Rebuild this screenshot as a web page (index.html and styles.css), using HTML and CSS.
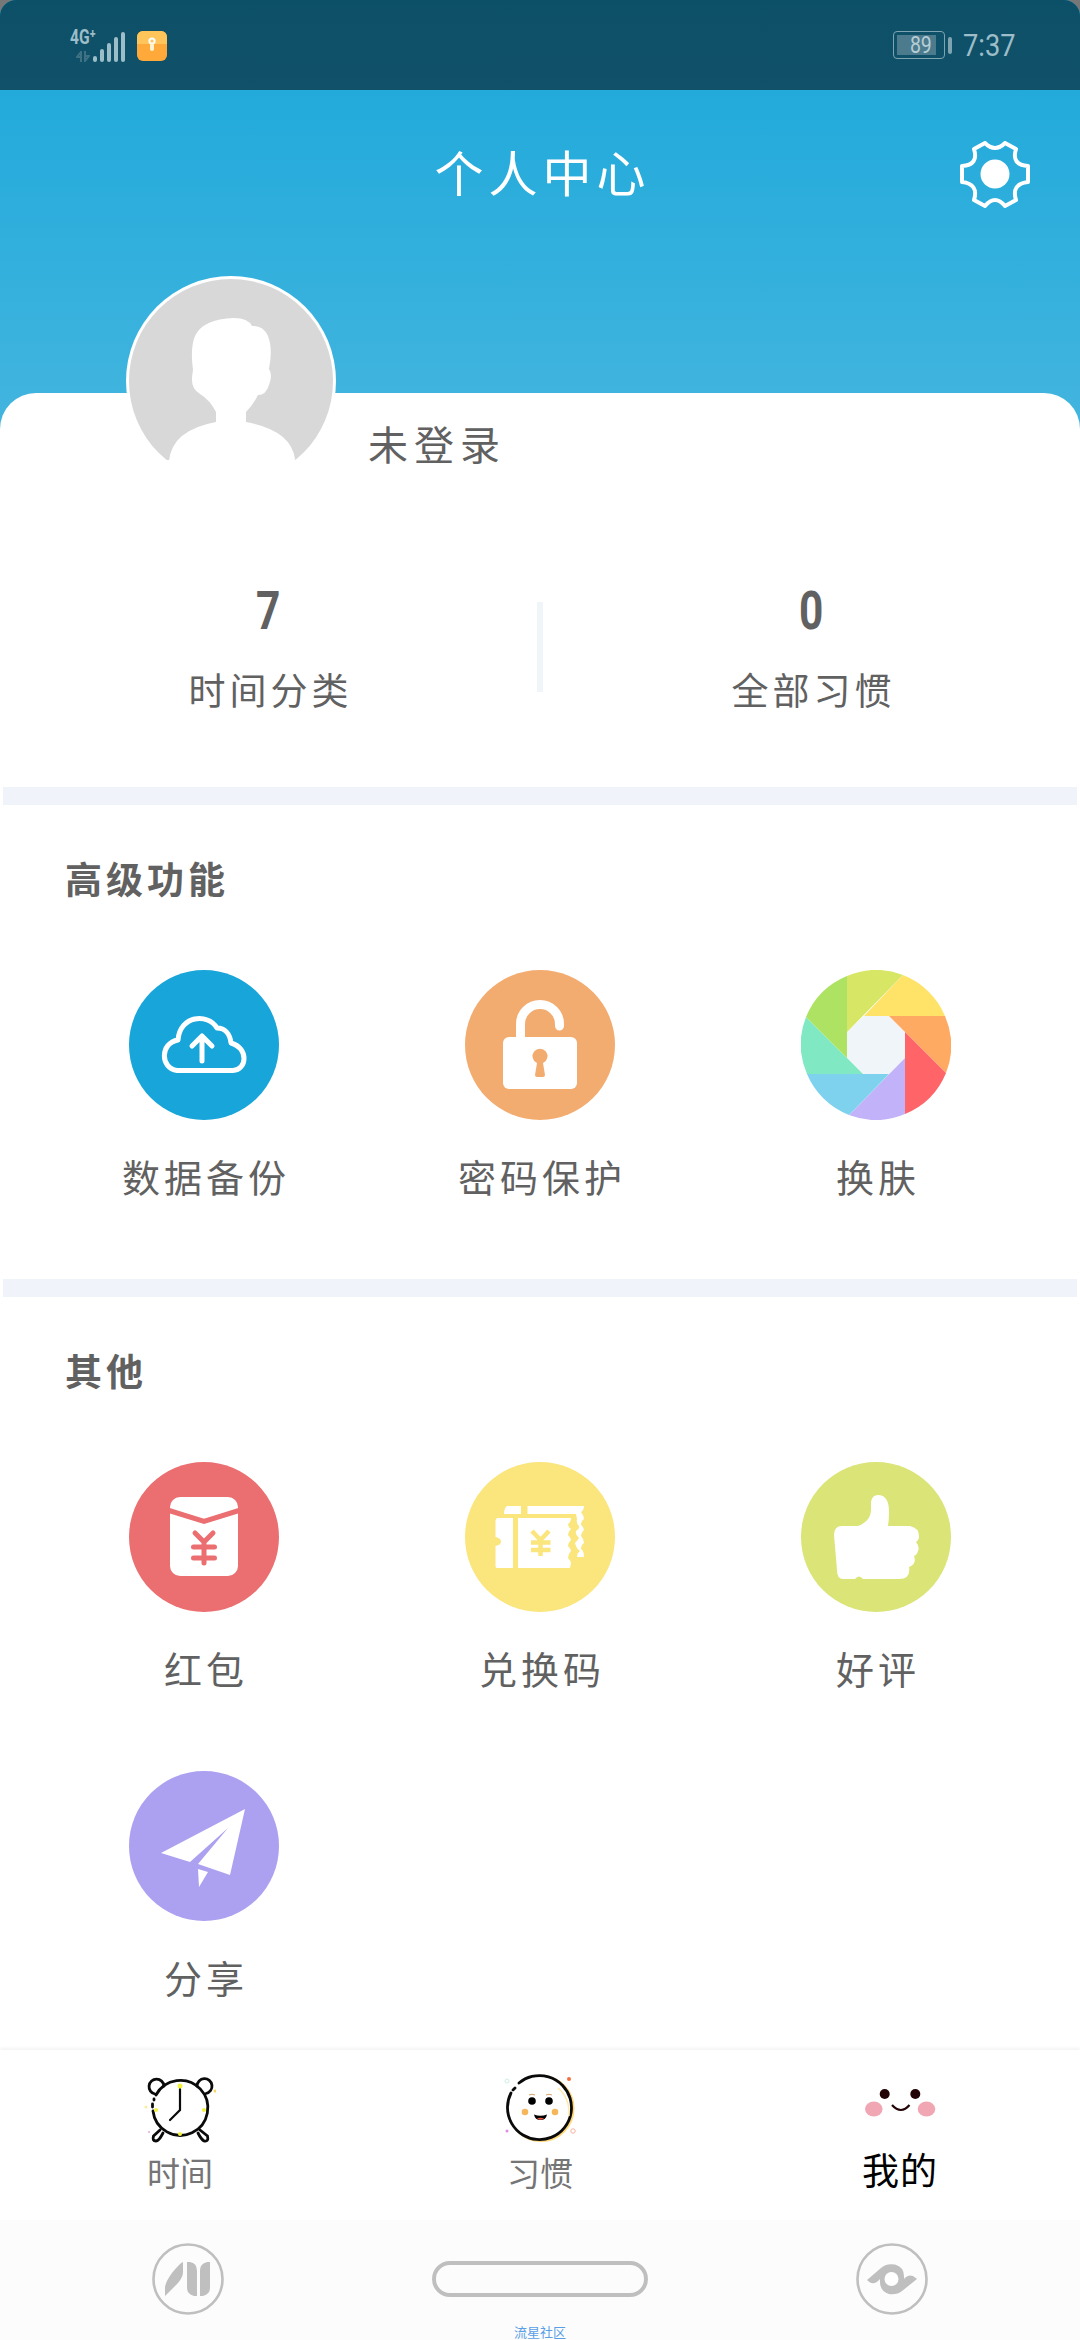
FILE: index.html
```html
<!DOCTYPE html>
<html lang="zh-CN">
<head>
    <meta charset="UTF-8">
    <meta name="viewport" content="width=device-width, initial-scale=1.0">
    <title>个人中心</title>
    <link rel="stylesheet" href="styles.css">
</head>
<body>
    <div class="screen">
        <div class="status-bar">
            <div class="status-left">
                <div class="network">
                    <span class="network-type">4G⁺</span>
                    <svg class="arrows" width="14" height="11" viewBox="0 0 14 11"><path d="M5 11V1L1 6h4M9 0v10l4-5H9" fill="none" stroke="#3f7185" stroke-width="2"/></svg>
                </div>
                <svg class="signal" width="33" height="31" viewBox="0 0 33 31" stroke="#9dbdc8" stroke-width="4" stroke-linecap="round"><path d="M3 27v2M10 20v9M17 14v15M24 8v21M31 3v26"/></svg>
                <svg width="30" height="30" viewBox="0 0 30 30">
                    <rect width="30" height="30" rx="6" fill="#ffa93b"/>
                    <path d="M0 13V6a6 6 0 0 1 6-6h18a6 6 0 0 1 6 6v7z" fill="#ffc55a"/>
                    <circle cx="15" cy="10" r="2.6" fill="none" stroke="#fff" stroke-width="2"/>
                    <path d="M15 14v4" stroke="#fff3cf" stroke-width="4" stroke-linecap="round"/>
                </svg>
            </div>
            <div class="status-right">
                <div class="battery"><div class="battery-level"><span>89</span></div></div>
                <div class="battery-cap"></div>
                <span class="time">7:37</span>
            </div>
        </div>

        <div class="header">
            <h1>个人中心</h1>
            <svg class="settings" width="70" height="67" viewBox="0 0 70 67">
                <path d="M25 2Q35 12 45 2L56 8Q51 24 68 25V41Q51 43 56 59L45 65Q35 53 25 65L14 59Q19 43 2 41V25Q19 24 14 8Z" fill="none" stroke="#fff" stroke-width="4" stroke-linejoin="round"/>
                <circle cx="35" cy="33" r="14.5" fill="#fff"/>
            </svg>
        </div>

        <div class="card">
            <div class="profile">
                <svg class="avatar" width="210" height="210" viewBox="0 0 210 210">
                    <defs><clipPath id="photo"><circle cx="105" cy="105" r="102"/></clipPath></defs>
                    <circle cx="105" cy="105" r="105" fill="#fff"/>
                    <g clip-path="url(#photo)">
                        <path d="M0 0H210V184H0Z" fill="#d8d8d8"/>
                        <path d="M67 94Q64 72 69 60Q77 43 108 42Q122 42 126 50Q137 49 142 60Q147 73 143 93Q147 99 143 109Q140 119 132 119Q127 129 120 136V146Q165 154 169 183L180 210H32L43 185Q46 154 90 146V136Q84 124 74 118Q65 113 66 101Z" fill="#fff"/>
                    </g>
                </svg>
                <span class="username">未登录</span>
            </div>
            <div class="stats">
                <div class="stat"><b>7</b><span>时间分类</span></div>
                <div class="stat-line"></div>
                <div class="stat"><b>0</b><span>全部习惯</span></div>
            </div>
        </div>

        <div class="section">
            <h2>高级功能</h2>
            <div class="grid">
                <div class="item">
                    <svg class="icon" viewBox="0 0 150 150">
                        <circle cx="75" cy="75" r="75" fill="#18a5d9"/>
                        <g fill="none" stroke="#fff" stroke-width="5" stroke-linecap="round" stroke-linejoin="round">
                            <path d="M48 100.5C31 98 31 73 49 70C51 45 79 43 88 58C96 58 101 64 102 73C120 78 118 100 104 100.5Z"/>
                            <path d="M73 91V66M63 76L73 66L83 76"/>
                        </g>
                    </svg>
                    <span>数据备份</span>
                </div>
                <div class="item">
                    <svg class="icon" viewBox="0 0 150 150">
                        <circle cx="75" cy="75" r="75" fill="#f3ac70"/>
                        <path d="M55.5 72V54a19.5 19.5 0 0 1 39 0v2" fill="none" stroke="#fff" stroke-width="9" stroke-linecap="round"/>
                        <rect x="38" y="67" width="74" height="52" rx="6" fill="#fff"/>
                        <path d="M72 93L70 105Q70 107 72 107H78Q80 107 80 105L78 93A7.5 7.5 0 1 0 72 93Z" fill="#f3ac70"/>
                    </svg>
                    <span>密码保护</span>
                </div>
                <div class="item">
                    <svg class="icon" viewBox="0 0 150 150">
                        <path d="M63 46H88L104 62V88L88 104H62L46 88V62Z" fill="#f0f5fa"/>
                        <path d="M46 62V6A75 75 0 0 1 102 5Z" fill="#d7e664"/>
                        <path d="M63 46L102 5A75 75 0 0 1 144 46Z" fill="#ffe368"/>
                        <path d="M88 46H144A75 75 0 0 1 145 103Z" fill="#ffaa62"/>
                        <path d="M104 62L145 103A75 75 0 0 1 104 144Z" fill="#ff6568"/>
                        <path d="M104 88V144A75 75 0 0 1 48 145Z" fill="#c2b2f9"/>
                        <path d="M88 104L48 145A75 75 0 0 1 6 104Z" fill="#7ed2ee"/>
                        <path d="M62 104H6A75 75 0 0 1 5 47Z" fill="#80e8c2"/>
                        <path d="M46 88L5 47A75 75 0 0 1 46 6Z" fill="#aee262"/>
                    </svg>
                    <span>换肤</span>
                </div>
            </div>
        </div>

        <div class="section section-other">
            <h2>其他</h2>
            <div class="grid">
                <div class="item">
                    <svg class="icon" viewBox="0 0 150 150">
                        <circle cx="75" cy="75" r="75" fill="#eb6e70"/>
                        <rect x="41" y="35" width="68" height="79" rx="10" fill="#fff"/>
                        <path d="M40 48.5L75 59.5L110 48.5" fill="none" stroke="#eb6e70" stroke-width="5"/>
                        <path d="M66 71L75 80L84 71M75 80V101M64.5 85H85.5M64.5 96H85.5" fill="none" stroke="#eb6e70" stroke-width="5" stroke-linecap="round"/>
                    </svg>
                    <span>红包</span>
                </div>
                <div class="item">
                    <svg class="icon" viewBox="0 0 150 150">
                        <circle cx="75" cy="75" r="75" fill="#fbe57d"/>
                        <g fill="#fff">
                            <path d="M32 56H48V106H32Q30.5 106 30.5 104V84Q36 83 36 79.5T30.5 75V58Z"/>
                            <path d="M53 56H106Q106 60 103 62Q103 65 106 67Q103 70 103 73Q106 76 106 78Q103 81 103 84Q106 87 106 89Q103 92 103 96Q106 99 106 101L105 106H53Z"/>
                            <path d="M42 44H56V52H39Q39 46 42 44ZM62.5 44H119Q119 48 116 50Q119 54 119 57Q116 59 116 63Q119 65 119 68Q116 71 116 74Q119 77 119 81Q116 83 116 87Q119 89 119 95H112Q112 91 115 89Q111 86 110 81Q112 79 114 76Q110 73 111 69Q115 67 114 64Q111 61 112 57L111 52H62.5Z"/>
                        </g>
                        <path d="M67 69L75.5 78L84 69M75.5 78V94M66 80.5H85.5M66 88H85.5" fill="none" stroke="#fbe57d" stroke-width="4.5"/>
                    </svg>
                    <span>兑换码</span>
                </div>
                <div class="item">
                    <svg class="icon" viewBox="0 0 150 150">
                        <circle cx="75" cy="75" r="75" fill="#dae477"/>
                        <path d="M33 73Q33 64 41 64H57Q71 59 70 45V40Q71 33 77 33Q88 33 88 50Q88 58 87 64H109Q118 66 118 74Q118 78 115 80Q119 85 117 89Q116 93 113 94Q116 102 108 105Q110 117 98 117H62Q58 112 54 117H42Q36 117 36 108Z" fill="#fff"/>
                    </svg>
                    <span>好评</span>
                </div>
                <div class="item">
                    <svg class="icon" viewBox="0 0 150 150">
                        <circle cx="75" cy="75" r="75" fill="#aca0f1"/>
                        <path d="M32 82L116 38L101 104L69 93L99 57L61 91ZM69 98L79 101L70 116Z" fill="#fff"/>
                    </svg>
                    <span>分享</span>
                </div>
            </div>
        </div>

        <div class="tab-bar">
            <div class="tab">
                <svg width="72" height="72" viewBox="0 0 72 72">
                    <g fill="none" stroke="#0a0a0a" stroke-width="2.8" stroke-linecap="round">
                        <path d="M12 21A27.5 27.5 0 1 1 9 37"/>
                        <path d="M8.500 30v3M10 25v1"/>
                        <path d="M11 20A7.5 7.5 0 1 1 20 12"/>
                        <path d="M53 12A7.5 7.5 0 1 1 62 19.5"/>
                        <path d="M16 56L9.500 62Q8 67 12 67Q15 67 19 59M56 56L63.500 62Q65 68 60 67Q57 65 54 59"/>
                        <path d="M36 15V36L26 46" stroke-width="2.2"/>
                    </g>
                    <g fill="#f1f23c"><circle cx="36" cy="12" r="2.5"/><circle cx="12" cy="36" r="2"/><circle cx="60" cy="36" r="2"/><circle cx="36" cy="60" r="2"/></g>
                    <circle cx="2" cy="33" r="1.5" fill="#f9ee9a"/><circle cx="71" cy="17" r="1.5" fill="#f4d95e"/><circle cx="5" cy="58" r="1" fill="#e3a9e0"/>
                </svg>
                <span>时间</span>
            </div>
            <div class="tab">
                <svg width="72" height="72" viewBox="0 0 72 72">
                    <circle cx="37" cy="34.5" r="32" fill="none" stroke="#ffd777" stroke-width="3"/>
                    <circle cx="35.5" cy="34" r="32.5" fill="#fff"/>
                    <path d="M15 9A32 32 0 1 1 7 19M11 14L9 16" fill="none" stroke="#0a0a0a" stroke-width="2.8" stroke-linecap="round"/>
                    <path d="M54 14Q66 24 65 42" fill="none" stroke="#ffe9a9" stroke-width="1.5"/>
                    <circle cx="28" cy="27" r="3.8"/><circle cx="45" cy="27" r="3.8"/>
                    <path d="M25 21q3-1.5 6 0M42 21q3-1.5 6 0" fill="none" stroke="#d5a26a"/>
                    <circle cx="21" cy="38" r="3.3" fill="#f6b75b"/><circle cx="51" cy="38" r="3.3" fill="#f6b75b"/>
                    <path d="M30 40.5Q36.5 43 43 40.5Q42 46 36.5 46T30 40.5Z"/><path d="M33 44.5Q36.5 43 40 44.5Q36.5 47 33 44.5Z" fill="#e8563f"/>
                    <circle cx="65" cy="5" r="2" fill="#f0703f"/><circle cx="3" cy="57" r="1.5" fill="#df8fe0"/>
                    <circle cx="69" cy="57" r="2.2" fill="none" stroke="#f5b2a0"/><circle cx="3" cy="7" r="2" fill="none" stroke="#cdeee8"/>
                </svg>
                <span>习惯</span>
            </div>
            <div class="tab active">
                <svg width="72" height="72" viewBox="0 0 72 72">
                    <circle cx="20.7" cy="20" r="5" fill="#230507"/><circle cx="51.3" cy="20" r="5" fill="#230507"/>
                    <ellipse cx="9.8" cy="35" rx="8.8" ry="7.5" fill="#f0a6b3"/><ellipse cx="62.5" cy="35" rx="8.8" ry="7.5" fill="#f0a6b3"/>
                    <path d="M28 31Q37 41 45.5 31" fill="none" stroke="#230507" stroke-width="2.2"/>
                </svg>
                <span>我的</span>
            </div>
        </div>

        <div class="nav-bar">
            <div class="nav-keys">
                <svg width="72" height="72" viewBox="0 0 72 72" fill="#bfbfbf">
                    <circle cx="36" cy="36" r="34.5" fill="none" stroke="#bfbfbf" stroke-width="2.6"/>
                    <path d="M13 53V44Q14 38 20 30Q28 20 31 19V29Q31 34 26 40ZM35 19H38Q45 20 45 28V53H42Q35 51 35 45ZM58 19H55Q48 21 48 27V53H51Q58 51 58 45Z"/>
                </svg>
                <div class="home-pill"></div>
                <svg width="72" height="72" viewBox="0 0 72 72" fill="#bfbfbf">
                    <circle cx="36" cy="36" r="34.5" fill="none" stroke="#bfbfbf" stroke-width="2.6"/>
                    <path d="M11 37L25 25Q30 20 39 21.5Q49 24 48 36Q52 31 57 33L61 36L46 48Q41 52 33 51Q23 48 24 36Q19 42 14 39.5Z"/>
                    <circle cx="35.5" cy="36" r="7" fill="#fff"/>
                </svg>
            </div>
            <span class="community">流星社区</span>
        </div>
    </div>
</body>
</html>
```

FILE: styles.css
```css
body {
    margin: 0;
    background: #777;
    font-family: "Noto Sans CJK SC", sans-serif;
    color: #616161;
}

h1, h2 {
    margin: 0;
}

svg {
    display: block;
    flex-shrink: 0;
}

.screen {
    width: 1080px;
    height: 2340px;
    display: flex;
    flex-direction: column;
    overflow: hidden;
    background: linear-gradient(#22aadb 90px, #43b5df 430px, #fff 430px);
    border-radius: 16px 16px 0 0;
}

.status-bar {
    height: 90px;
    box-sizing: border-box;
    padding: 0 66px 0 70px;
    display: flex;
    justify-content: space-between;
    align-items: center;
    background: linear-gradient(#0c5067, #11516a);
    color: #9dbdc8;
}

.status-left, .status-right {
    display: flex;
    align-items: center;
}

.status-left {
    padding-top: 2px;
}

.network {
    width: 22px;
    height: 32px;
    display: flex;
    flex-direction: column;
    justify-content: space-between;
}

.network-type {
    font: bold 20px/15px Roboto, sans-serif;
    white-space: nowrap;
    transform: scaleX(0.78);
    transform-origin: left;
}

.arrows {
    margin-left: 6px;
}

.signal {
    margin-right: 12px;
}

.battery {
    width: 52px;
    height: 28px;
    box-sizing: border-box;
    padding: 3px;
    border: 1.5px solid #7fa3b0;
    border-radius: 4px;
}

.battery-level {
    width: 39px;
    height: 100%;
    display: flex;
    align-items: center;
    justify-content: flex-end;
    background: #4b7b8d;
}

.battery-level span {
    margin-right: 4px;
    font: 23px Roboto, sans-serif;
    color: #b5cdd5;
    transform: scaleX(0.85);
    transform-origin: right;
}

.battery-cap {
    width: 4px;
    height: 17px;
    margin: 0 11px 0 3px;
    border-radius: 2px;
    background: #7fa3b0;
}

.time {
    width: 51px;
    font: 31px Roboto, sans-serif;
    transform: scaleX(0.88);
    transform-origin: left;
}

.header {
    height: 303px;
    display: grid;
    grid-template-columns: 120px 1fr 120px;
}

.header h1 {
    grid-column: 2;
    height: 162px;
    text-align: center;
    font-size: 49px;
    line-height: 162px;
    font-weight: 400;
    letter-spacing: 5px;
    text-indent: 5px;
    color: #fff;
}

.settings {
    margin-top: 51px;
}

.card {
    height: 394px;
    background: #fff;
    border-radius: 36px 36px 0 0;
}

.profile {
    height: 210px;
    margin: -117px 0 0 126px;
    display: flex;
}

.username {
    margin: 136px 0 0 32px;
    font-size: 40px;
    line-height: 62px;
    letter-spacing: 6px;
}

.stats {
    height: 124px;
    padding-top: 90px;
    display: flex;
    justify-content: center;
}

.stat {
    flex: 1;
    display: flex;
    flex-direction: column;
    align-items: center;
}

.stat b {
    height: 68px;
    font: bold 53px/70px Roboto, sans-serif;
    transform: scaleX(0.8);
}

.stat span {
    margin-top: 17px;
    font-size: 37px;
    line-height: 56px;
    letter-spacing: 4px;
    text-indent: 4px;
}

.stat-line {
    width: 6px;
    height: 90px;
    margin-top: 26px;
    background: #f0f5f9;
}

/* every section starts with a pale strip across the page */
.section {
    height: 492px;
    padding: 0 36px;
    background: #fff;
}

.section::before {
    content: "";
    display: block;
    height: 18px;
    margin: 0 -33px;
    background: #f0f4fa;
}

.section-other {
    flex: 1;
}

.section h2 {
    height: 147px;
    padding-left: 29px;
    font-size: 37px;
    line-height: 147px;
    font-weight: 700;
    letter-spacing: 4px;
}

.grid {
    display: grid;
    grid-template-columns: repeat(3, 1fr);
    padding-top: 18px;
}

.item {
    height: 309px;
    display: flex;
    flex-direction: column;
    align-items: center;
}

.icon {
    width: 150px;
    height: 150px;
}

.item span {
    margin-top: 27px;
    font-size: 38px;
    line-height: 58px;
    letter-spacing: 4px;
    text-indent: 4px;
}

.tab-bar {
    height: 170px;
    display: flex;
    background: #fff;
    box-shadow: 0 -2px 3px #f4f4f4;
}

.tab {
    flex: 1;
    display: flex;
    flex-direction: column;
    align-items: center;
    padding-top: 24px;
}

.tab span {
    margin-top: 2px;
    font-size: 33px;
    line-height: 48px;
    color: #757575;
}

.tab.active span {
    margin-top: -1px;
    font-size: 37px;
    letter-spacing: 1px;
    color: #000;
}

.nav-bar {
    height: 120px;
    box-sizing: border-box;
    padding-top: 23px;
    background: #fcfcfc;
}

.nav-keys {
    display: flex;
    justify-content: space-between;
    align-items: center;
    padding: 0 152px;
}

.home-pill {
    width: 216px;
    height: 36px;
    box-sizing: border-box;
    border: 4.5px solid #bfbfbf;
    border-radius: 18px;
}

.community {
    display: block;
    margin-top: 8px;
    font-size: 13px;
    line-height: 17px;
    text-align: center;
    color: #5a9fe6;
}
```
